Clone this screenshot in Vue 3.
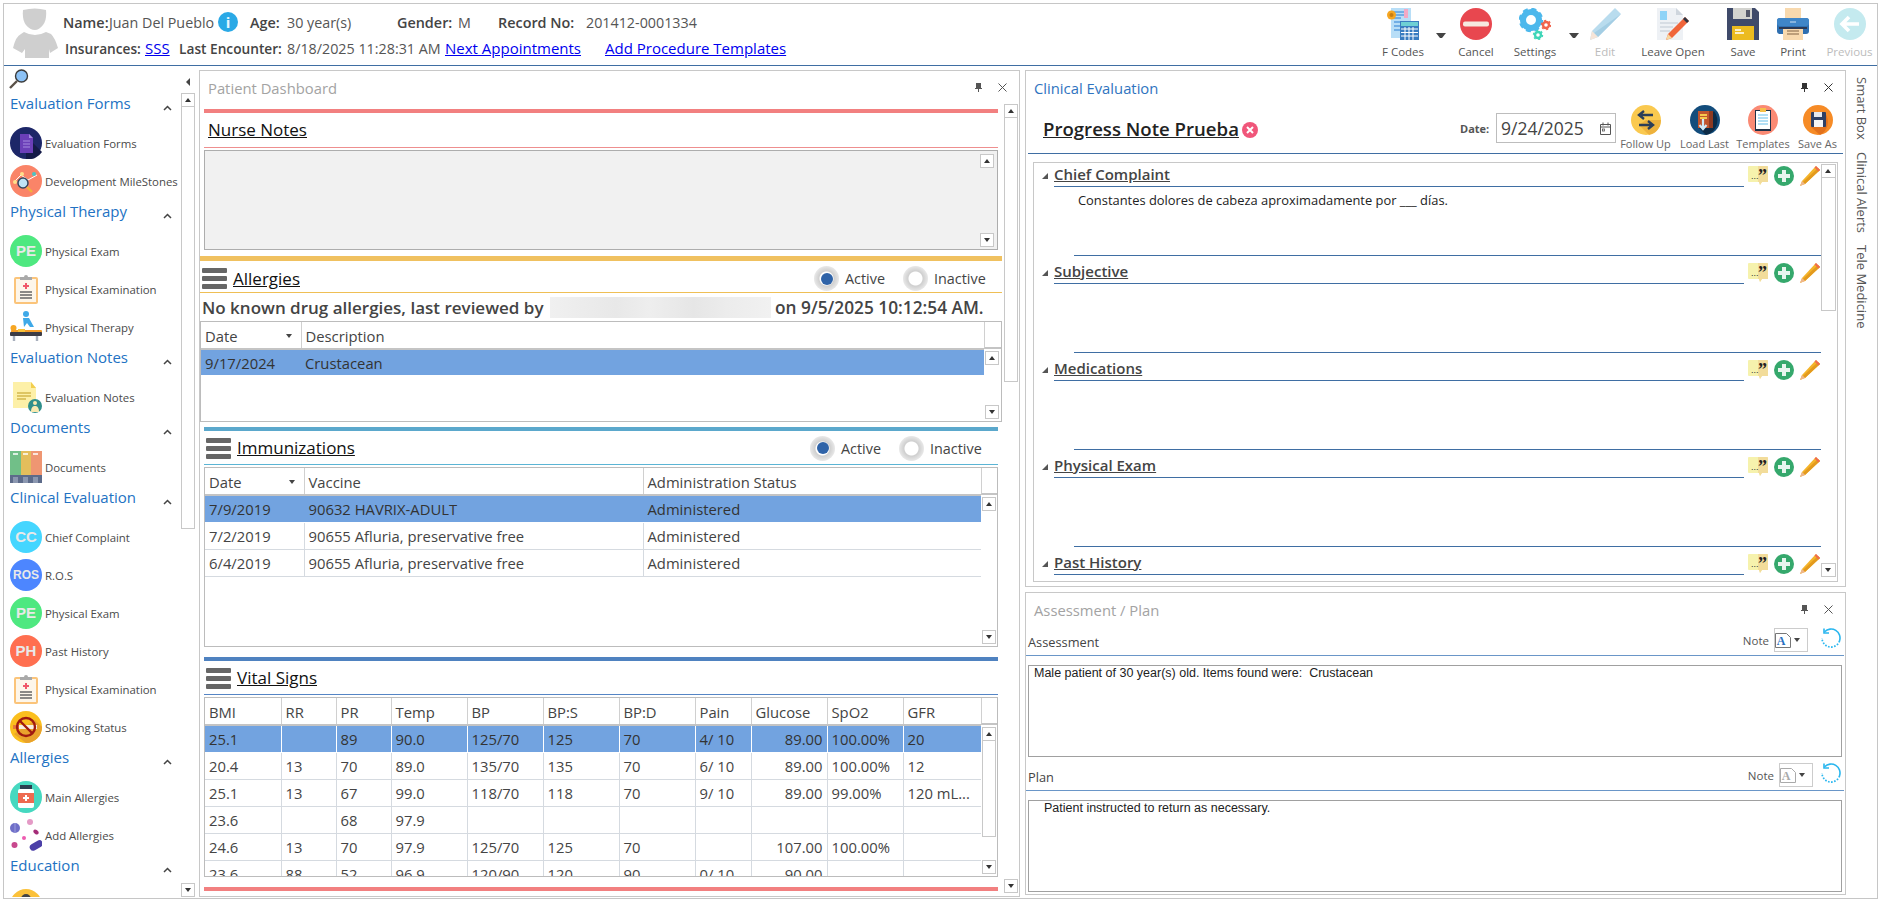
<script setup>
const c = (bg, inner) => `<svg viewBox="0 0 32 32" width="32" height="32"><circle cx="16" cy="16" r="16" fill="${bg}"/>${inner}</svg>`
const letters = (bg, t, s = 15) => c(bg, `<text x="16" y="${16 + s * 0.36}" text-anchor="middle" font-family="Liberation Sans" font-weight="700" font-size="${s}" fill="#e9e9e9">${t}</text>`)
const clip = `<svg viewBox="0 0 32 32" width="32" height="32"><rect x="4" y="4" width="24" height="27" rx="2" fill="#fbc47a"/><rect x="6" y="6" width="20" height="23" fill="#fdf6ea"/><path d="M10 7V4h4a2 2 0 0 1 4 0h4v3z" fill="#a9a9a9"/><path d="M16 10v6M13 13h6" stroke="#f0596a" stroke-width="2"/><path d="M10 19h12M10 22h12M10 25h12" stroke="#666" stroke-width="1.3"/></svg>`
const icons = {
  forms: c('#1d2768', `<path d="M16 9l16 16a16 16 0 0 1-16 7z" fill="#141a48"/><path d="M10 7h9l4 4v15H10z" fill="#6b3fb8"/><path d="M19 7l4 4h-4z" fill="#a58be0"/><path d="M13 14h7M13 17h7M13 20h7" stroke="#a58be0" stroke-width="1.2"/>`),
  miles: c('#fa8468', `<path d="M4 17l7-7 7 5 9-5" fill="none" stroke="#fff" stroke-width="1"/><circle cx="5" cy="17" r="2" fill="#ffe08a"/><circle cx="12" cy="9" r="2" fill="#ffe08a"/><circle cx="24" cy="9" r="2" fill="#49c4c4"/><circle cx="13" cy="18" r="5" fill="#bfe4f5" stroke="#34485e" stroke-width="1.5"/><path d="M17 22l5 5" stroke="#f2b23c" stroke-width="2.4"/>`),
  pe: letters('#4ee880', 'PE', 15),
  clip,
  therapy: `<svg viewBox="0 0 32 32" width="32" height="32"><circle cx="16" cy="3" r="3" fill="#3fa9e8"/><path d="M13 7l6 0 5 9h-4l-3-4-3 4z" fill="#3fa9e8"/><circle cx="3.5" cy="17" r="3" fill="#f6a623"/><rect x="1" y="19" width="31" height="5" rx="1" fill="#f39b26"/><rect x="0" y="21" width="32" height="4" rx="1" fill="#3c3c46"/><path d="M4 25v5M27 25v5" stroke="#a9b0bd" stroke-width="2.4"/><path d="M8 18h7v3H8z" fill="#f8c23a"/></svg>`,
  notes: `<svg viewBox="0 0 32 32" width="32" height="32"><path d="M3 1h18l5 6v20H3z" fill="#fdf0a8"/><path d="M21 1l5 6h-5z" fill="#f2ce4e"/><path d="M7 12h14M7 15h14M7 18h9" stroke="#d3b84e" stroke-width="1.3"/><circle cx="25" cy="25" r="7" fill="#2f8f8b"/><circle cx="25" cy="22" r="2" fill="#f8e9b0"/><path d="M21 31c0-5 2-6 4-6s4 1 4 6z" fill="#f8e9b0"/></svg>`,
  docs: `<svg viewBox="0 0 32 32" width="32" height="32"><rect x="0" y="0" width="11" height="32" fill="#71bf88"/><rect x="11" y="0" width="10" height="32" fill="#e4be5c"/><rect x="21" y="0" width="11" height="32" fill="#ef9672"/><path d="M3 3h5M13 3h5M23 3h5" stroke="#fff" stroke-width="1.6"/><rect y="24" width="32" height="8" fill="#5d6b8a"/><path d="M3 26h5v6H3zM13 26h5v6h-5zM23 26h5v6h-5z" fill="#8b97b0"/></svg>`,
  cc: letters('#45d6ff', 'CC', 15),
  ros: letters('#4d86ff', 'ROS', 12),
  ph: letters('#ff6f50', 'PH', 15),
  smoke: c('#fbbf1e', `<path d="M16 32a16 16 0 0 0 16-16L25 9 4 23z" fill="#e9a22c"/><rect x="3" y="14" width="24" height="4" fill="#f7f0e0"/><rect x="3" y="14" width="6" height="4" fill="#e87a3c"/><circle cx="16" cy="16" r="9" fill="none" stroke="#a01a10" stroke-width="2.4"/><path d="M10 10l12 12" stroke="#a01a10" stroke-width="2.4"/>`),
  allergy: c('#46d8c0', `<rect x="10" y="4" width="12" height="4" fill="#2c3e50"/><rect x="8" y="8" width="16" height="19" rx="2" fill="#fff"/><rect x="8" y="12" width="16" height="10" fill="#ee6a50"/><path d="M16 14v6M13 17h6" stroke="#fff" stroke-width="2"/>`),
  pills: `<svg viewBox="0 0 32 32" width="32" height="32"><circle cx="5" cy="9" r="5" fill="#6f6fc8"/><path d="M5 4v10" stroke="#9c9cdc"/><circle cx="20" cy="3" r="3" fill="#e49ac6"/><ellipse cx="26" cy="13" rx="3" ry="2" fill="#a42c78" transform="rotate(35 26 13)"/><circle cx="14" cy="19" r="2" fill="#ee5cb0"/><circle cx="4.500" cy="26" r="3" fill="#c8488e"/><rect x="19" y="23" width="14" height="7" rx="3.500" fill="#4c40a8" transform="rotate(-30 26 26)"/></svg>`,
  edu: c('#fbc13a', `<circle cx="16" cy="12" r="5" fill="#e9b58a"/><path d="M11 10a5 5 0 0 1 10 0z" fill="#444"/><path d="M7 30c0-9 5-11 9-11s9 2 9 11z" fill="#556"/>`),
  follow: `<svg viewBox="0 0 30 30" width="30" height="30"><circle cx="15" cy="15" r="15" fill="#fac94f"/><path d="M15 15l15 0a15 15 0 0 1-12 15L8 20z" fill="#eeb23c"/><path d="M22 10H10M13 6l-5 4 5 4M8 20h12M17 16l5 4-5 4" fill="none" stroke="#2b3d58" stroke-width="2.4"/></svg>`,
  load: `<svg viewBox="0 0 30 30" width="30" height="30"><circle cx="15" cy="15" r="15" fill="#134d7c"/><path d="M24 6a15 15 0 0 1-8 24L8 22z" fill="#0c2b47"/><rect x="8" y="6" width="15" height="17" fill="#c0552e"/><rect x="19" y="6" width="4" height="17" fill="#8c3a22"/><path d="M10 10h7M10 13h7" stroke="#f6c84e" stroke-width="2"/><path d="M13 14v10M9.500 20l3.500 4 3.500-4" fill="none" stroke="#cfe9f7" stroke-width="2.200"/></svg>`,
  temp: `<svg viewBox="0 0 30 30" width="30" height="30"><circle cx="15" cy="15" r="15" fill="#fa8a74"/><rect x="7" y="5" width="16" height="21" fill="#203148"/><rect x="8" y="6" width="14" height="18" fill="#fff"/><path d="M10 10h10M10 13h10M10 16h10M10 19h10" stroke="#9ad5f2" stroke-width="1.400"/><rect x="12" y="3" width="6" height="4" fill="#f5c04a"/></svg>`,
  saveas: `<svg viewBox="0 0 30 30" width="30" height="30"><circle cx="15" cy="15" r="15" fill="#f68b26"/><path d="M22 8a15 15 0 0 1-5 22L8 22z" fill="#e2711c"/><rect x="8" y="7" width="15" height="15" rx="1" fill="#2e3f64"/><rect x="11" y="7" width="8" height="5" fill="#e4e8ee"/><rect x="11" y="15" width="9" height="7" fill="#f5f5f5"/></svg>`,
  fcodes: `<svg viewBox="0 0 32 32" width="32" height="32"><rect x="4" y="0" width="20" height="30" fill="#b8def7"/><path d="M7 4h14M7 7h14M7 10h7M7 14h14M7 18h14M7 22h9" stroke="#5a9fe0" stroke-width="1.500"/><rect x="17" y="1" width="4" height="9" fill="#f2a8c4"/><rect x="13" y="13" width="19" height="19" fill="#3a7cc0"/><rect x="14" y="14" width="17" height="4" fill="#6ecfd4"/><path d="M14 21h17M14 24.500h17M14 28h17M18 19v13M22 19v13M26 19v13" stroke="#fff" stroke-width="1"/><circle cx="4.500" cy="7" r="4.500" fill="#f5a623"/><circle cx="4.500" cy="7" r="2" fill="#c97e10"/></svg>`,
  cancel: `<svg viewBox="0 0 32 32" width="32" height="32"><circle cx="16" cy="16" r="16" fill="#e8474f"/><rect x="3" y="13.500" width="26" height="5" rx="2" fill="#f6e9e0"/></svg>`,
  settings: `<svg viewBox="0 0 32 32" width="32" height="32"><circle cx="12" cy="12" r="8" fill="none" stroke="#4db8ec" stroke-width="6"/><circle cx="12" cy="12" r="11" fill="none" stroke="#4db8ec" stroke-width="2.500" stroke-dasharray="5 3.640"/><circle cx="27" cy="17" r="3" fill="none" stroke="#f2644c" stroke-width="2.400"/><circle cx="27" cy="17" r="4.500" fill="none" stroke="#f2644c" stroke-width="1.400" stroke-dasharray="2 2.700"/><circle cx="19" cy="27" r="3" fill="none" stroke="#3fd6b8" stroke-width="2.400"/><circle cx="19" cy="27" r="4.500" fill="none" stroke="#3fd6b8" stroke-width="1.400" stroke-dasharray="2 2.700"/></svg>`,
  edit: `<svg viewBox="0 0 32 32" width="32" height="32"><path d="M26 0l6 6L9 29l-8 3 2-9z" fill="#b9dcee"/><path d="M32 6L9 29l-4-4z" fill="#a4cee4"/><path d="M3 23l6 6-8 3z" fill="#f6e5d8"/></svg>`,
  leave: `<svg viewBox="0 0 32 32" width="32" height="32"><path d="M0 0h19l7 7v25H0z" fill="#eef1f5"/><path d="M19 0l7 7h-7z" fill="#cfd6de"/><rect x="3" y="3" width="7" height="9" fill="#8ed3f7"/><path d="M3 15h18M3 19h13M3 23h10" stroke="#cfd6de" stroke-width="1.500"/><path d="M28 9l4 4-17 17-6 2 2-6z" fill="#f0653a"/><path d="M28 9l4 4-2 2-4-4z" fill="#2e3440"/><path d="M11 26l4 4-6 2z" fill="#f8d7a0"/></svg>`,
  save: `<svg viewBox="0 0 32 32" width="32" height="32"><path d="M0 0h28l4 4v28H0z" fill="#3f4a6a"/><rect x="6" y="0" width="19" height="11" fill="#d3d3cf"/><rect x="19" y="2" width="4" height="7" fill="#54586a"/><rect x="5" y="18" width="22" height="14" fill="#ecbb1f"/><path d="M8 22h6M8 25h9" stroke="#fff" stroke-width="1.400"/></svg>`,
  print: `<svg viewBox="0 0 32 32" width="32" height="32"><rect x="8" y="0" width="16" height="11" fill="#f8d9ae"/><rect x="0" y="10" width="32" height="16" rx="3" fill="#2f6fb0"/><rect x="0" y="10" width="32" height="8" rx="3" fill="#3f86c8"/><path d="M13 14h6" stroke="#cfe2f3"/><rect x="6" y="19" width="20" height="13" fill="#f8d9ae"/><path d="M10 23h12M10 26h12" stroke="#a98a68" stroke-width="1.300"/><rect x="2" y="19" width="28" height="2" fill="#2b3a55"/></svg>`,
  prev: `<svg viewBox="0 0 32 32" width="32" height="32"><circle cx="16" cy="16" r="16" fill="#c4eaef"/><path d="M25 16H9M15 9l-7 7 7 7" fill="none" stroke="#fff" stroke-width="3.600"/></svg>`,
  search: `<svg viewBox="0 0 20 20" width="20" height="20"><path d="M8 12l-7 7" stroke="#5a5148" stroke-width="2.400"/><circle cx="12.500" cy="7" r="6" fill="#8cc2f6" stroke="#3b3b3b" stroke-width="1.400"/></svg>`,
  quote: `<svg viewBox="0 0 20 19" width="20" height="19"><path d="M0 1a1 1 0 0 1 1-1h18a1 1 0 0 1 1 1v15H14l-2 3-1-3H1a1 1 0 0 1-1-1z" fill="#f6f2ad"/><path d="M10 0h9a1 1 0 0 1 1 1v15h-6l-2 3-1-3h-1z" fill="#f2dc9a"/><text x="3" y="13" font-family="Liberation Sans" font-size="9" fill="#333">...</text><text x="10" y="16" font-family="Liberation Serif" font-weight="700" font-size="18" fill="#222">”</text></svg>`,
  plus: `<svg viewBox="0 0 20 20" width="20" height="20"><circle cx="10" cy="10" r="10" fill="#35a86c"/><path d="M10 4v12M4 10h12" stroke="#e8f5ee" stroke-width="4"/></svg>`,
  pencil: `<svg viewBox="0 0 20 20" width="20" height="20"><path d="M16 0l4 4L5 18l-5 2 2-5z" fill="#f4b42a"/><path d="M20 4L5 18l-2-2L18 2z" fill="#e39a1e"/><path d="M2 15l3 3-5 2z" fill="#eeb68c"/><path d="M16 0l4 4-1.500 1.500-4-4z" fill="#f06a50"/></svg>`
}
const head1 = [
  { t: 'Name:', w: 46, k: 'lab' }, { t: 'Juan Del Pueblo', w: 109, k: 'val' }, { t: '', w: 32, k: 'badgecell' },
  { t: 'Age:', w: 37, k: 'lab' }, { t: '30 year(s)', w: 110, k: 'val' }, { t: 'Gender:', w: 61, k: 'lab' },
  { t: 'M', w: 40, k: 'val' }, { t: 'Record No:', w: 88, k: 'lab' }, { t: '201412-0001334', w: 130, k: 'val' }
]
const head2 = [
  { t: 'Insurances:', w: 80, k: 'lab' }, { t: 'SSS', w: 34, k: 'lnk' }, { t: 'Last Encounter:', w: 108, k: 'lab' },
  { t: '8/18/2025 11:28:31 AM', w: 158, k: 'val' }, { t: 'Next Appointments', w: 160, k: 'lnk' }, { t: 'Add Procedure Templates', w: 200, k: 'lnk' }
]
const tools = [
  { t: 'F Codes', i: 'fcodes', w: 66 }, { arrow: true }, { t: 'Cancel', i: 'cancel', w: 50 },
  { t: 'Settings', i: 'settings', w: 68 }, { arrow: true, flush: true }, { t: 'Edit', i: 'edit', w: 52, off: true },
  { t: 'Leave Open', i: 'leave', w: 84 }, { t: 'Save', i: 'save', w: 56 }, { t: 'Print', i: 'print', w: 44 },
  { t: 'Previous', i: 'prev', w: 43, off: true, last: true }
]
const side = [
  { h: 'Evaluation Forms', items: [['Evaluation Forms', 'forms'], ['Development MileStones', 'miles']] },
  { h: 'Physical Therapy', items: [['Physical Exam', 'pe'], ['Physical Examination', 'clip'], ['Physical Therapy', 'therapy']] },
  { h: 'Evaluation Notes', items: [['Evaluation Notes', 'notes']] },
  { h: 'Documents', items: [['Documents', 'docs']] },
  { h: 'Clinical Evaluation', items: [['Chief Complaint', 'cc'], ['R.O.S', 'ros'], ['Physical Exam', 'pe'], ['Past History', 'ph'], ['Physical Examination', 'clip'], ['Smoking Status', 'smoke']] },
  { h: 'Allergies', items: [['Main Allergies', 'allergy'], ['Add Allergies', 'pills']] },
  { h: 'Education', items: [['', 'edu']] }
]
const immun = [
  ['7/9/2019', '90632 HAVRIX-ADULT', 'Administered'],
  ['7/2/2019', '90655 Afluria, preservative free', 'Administered'],
  ['6/4/2019', '90655 Afluria, preservative free', 'Administered']
]
const vitalCols = [
  ['BMI', 76], ['RR', 55], ['PR', 55], ['Temp', 76], ['BP', 76], ['BP:S', 76], ['BP:D', 76], ['Pain', 56], ['Glucose', 76], ['SpO2', 76], ['GFR', 78]
]
const vitals = [
  ['25.1', '', '89', '90.0', '125/70', '125', '70', '4/ 10', '89.00', '100.00%', '20'],
  ['20.4', '13', '70', '89.0', '135/70', '135', '70', '6/ 10', '89.00', '100.00%', '12'],
  ['25.1', '13', '67', '99.0', '118/70', '118', '70', '9/ 10', '89.00', '99.00%', '120 mL...'],
  ['23.6', '', '68', '97.9', '', '', '', '', '', '', ''],
  ['24.6', '13', '70', '97.9', '125/70', '125', '70', '', '107.00', '100.00%', ''],
  ['23.6', '88', '52', '96.9', '120/90', '120', '90', '0/ 10', '90.00', '', '']
]
const sections = [
  { t: 'Chief Complaint', body: 'Constantes dolores de cabeza aproximadamente por ___ días.' },
  { t: 'Subjective' }, { t: 'Medications' }, { t: 'Physical Exam' }, { t: 'Past History' }
]
const actions = [
  { t: 'Follow Up', i: 'follow', w: 59 }, { t: 'Load Last', i: 'load', w: 59 },
  { t: 'Templates', i: 'temp', w: 58 }, { t: 'Save As', i: 'saveas', w: 51 }
]
const rail = ['Smart Box', 'Clinical Alerts', 'Tele Medicine']
const assessmentText = 'Male patient of 30 year(s) old. Items found were:  Crustacean'
</script>

<template>
  <div class="frame">
    <header class="top">
      <svg class="avatar" viewBox="0 0 46 50" width="46" height="50">
        <path d="M10 2Q22-1 33 2 34 12 30 17 26 22 22 22 17 22 13 17 9 12 10 2z" fill="#cfcfcf" />
        <path d="M11 24Q22 30 33 24L38 26Q42 30 45 40L37 45 36 41V50Q22 51 12 50V41L9 45 0 40Q3 28 8 26z" fill="#cfcfcf" />
      </svg>
      <div class="info">
        <div class="irow">
          <template v-for="x in head1" :key="x.t + x.w">
            <span :class="x.k" :style="{ width: x.w + 'px' }">
              <i v-if="x.k === 'badgecell'" class="ibadge">i</i>{{ x.t }}
            </span>
          </template>
        </div>
        <div class="irow second">
          <span v-for="x in head2" :key="x.t" :class="x.k" :style="{ width: x.w + 'px' }"><a v-if="x.k === 'lnk'">{{ x.t }}</a><template v-else>{{ x.t }}</template></span>
        </div>
      </div>
      <div class="tools">
        <template v-for="(b, n) in tools" :key="n">
          <i v-if="b.arrow" class="tarrow" :class="{ flush: b.flush }"></i>
          <div v-else class="tool" :class="{ off: b.off, last: b.last }" :style="{ width: b.w + 'px' }">
            <span class="ticon" v-html="icons[b.i]"></span>
            <span class="tlabel">{{ b.t }}</span>
          </div>
        </template>
      </div>
    </header>

    <main class="main">
      <aside class="side">
        <div class="side-top">
          <span class="sic" v-html="icons.search"></span>
          <i class="collapse"></i>
        </div>
        <div class="side-body">
          <div class="side-list">
            <section v-for="g in side" :key="g.h">
              <div class="ghead"><span>{{ g.h }}</span><svg width="9" height="6" viewBox="0 0 9 6"><path d="M1 5l3.500-3.500L8 5" fill="none" stroke="#444" stroke-width="1.500" /></svg></div>
              <div v-for="it in g.items" :key="it[0]" class="sitem">
                <span class="sic32" v-html="icons[it[1]]"></span>
                <span>{{ it[0] }}</span>
              </div>
            </section>
          </div>
          <div class="sb sb-side"><i class="btn up"></i><div class="track"><i class="thumb"></i></div><i class="btn dn"></i></div>
        </div>
      </aside>

      <section class="panel dash">
        <div class="ptitle grey">
          <span>Patient Dashboard</span>
          <span class="pctl">
            <svg class="pin" width="7" height="9" viewBox="0 0 7 9"><path d="M1 0h5v5h1v1H4v3H3V6H0V5h1z" fill="#555" /></svg>
            <svg width="9" height="9" viewBox="0 0 9 9"><path d="M.5.5l8 8M8.500.5l-8 8" stroke="#555" /></svg>
          </span>
        </div>
        <div class="dbody">
          <div class="dcontent">
            <div class="bar bar-red inset"></div>
            <div class="dhead h-nurse inset"><span class="dtitle">Nurse Notes</span></div>
            <div class="nurse inset">
              <div class="sb sb-nurse"><i class="btn up"></i><div class="track"></div><i class="btn dn"></i></div>
            </div>

            <div class="bar bar-yel"></div>
            <div class="dhead h-all">
              <span class="burger"><i></i><i></i><i></i></span>
              <span class="dtitle">Allergies</span>
              <span class="radios">
                <i class="radio on"></i><span class="rl">Active</span>
                <i class="radio"></i><span class="rl">Inactive</span>
              </span>
            </div>
            <div class="nka">
              <span>No known drug allergies, last reviewed by</span>
              <i class="blurred"></i>
              <span>on 9/5/2025 10:12:54 AM.</span>
            </div>
            <div class="tbl t-all">
              <div class="tmain">
                <table>
                  <colgroup><col class="c100" /><col /></colgroup>
                  <thead><tr><th><span class="thsort">Date<i class="sort"></i></span></th><th>Description</th></tr></thead>
                  <tbody><tr class="sel"><td>9/17/2024</td><td>Crustacean</td></tr></tbody>
                </table>
              </div>
              <div class="tside">
                <div class="thfill"></div>
                <div class="sb"><i class="btn up"></i><div class="track"></div><i class="btn dn"></i></div>
              </div>
            </div>

            <div class="bar bar-blue inset"></div>
            <div class="dhead h-imm inset">
              <span class="burger"><i></i><i></i><i></i></span>
              <span class="dtitle">Immunizations</span>
              <span class="radios">
                <i class="radio on"></i><span class="rl">Active</span>
                <i class="radio"></i><span class="rl">Inactive</span>
              </span>
            </div>
            <div class="tbl t-imm inset">
              <div class="tmain">
                <table>
                  <colgroup><col class="c99" /><col class="c339" /><col /></colgroup>
                  <thead><tr><th><span class="thsort">Date<i class="sort"></i></span></th><th>Vaccine</th><th>Administration Status</th></tr></thead>
                  <tbody><tr v-for="(r, n) in immun" :key="n" :class="{ sel: n === 0 }"><td v-for="v in r" :key="v">{{ v }}</td></tr></tbody>
                </table>
              </div>
              <div class="tside">
                <div class="thfill"></div>
                <div class="sb"><i class="btn up"></i><div class="track"></div><i class="btn dn"></i></div>
              </div>
            </div>

            <div class="bar bar-dark inset"></div>
            <div class="dhead h-vit inset">
              <span class="burger"><i></i><i></i><i></i></span>
              <span class="dtitle">Vital Signs</span>
            </div>
            <div class="tbl t-vit inset">
              <div class="tmain">
                <table>
                  <colgroup><col v-for="v in vitalCols" :key="v[0]" :style="{ width: v[1] + 'px' }" /></colgroup>
                  <thead><tr><th v-for="v in vitalCols" :key="v[0]">{{ v[0] }}</th></tr></thead>
                  <tbody>
                    <tr v-for="(r, n) in vitals" :key="n" :class="{ sel: n === 0 }">
                      <td v-for="(v, m) in r" :key="m" :class="{ num: m === 8 }">{{ v }}</td>
                    </tr>
                  </tbody>
                </table>
              </div>
              <div class="tside">
                <div class="thfill"></div>
                <div class="sb"><i class="btn up"></i><div class="track"><i class="thumb"></i></div><i class="btn dn"></i></div>
              </div>
            </div>
            <div class="bar bar-red inset last-red"></div>
          </div>
          <div class="sb sb-dash"><i class="btn up"></i><div class="track"><i class="thumb"></i></div><i class="btn dn"></i></div>
        </div>
      </section>

      <div class="right">
        <section class="panel clinical">
          <div class="ptitle blue">
            <span>Clinical Evaluation</span>
            <span class="pctl">
              <svg class="pin" width="7" height="9" viewBox="0 0 7 9"><path d="M1 0h5v5h1v1H4v3H3V6H0V5h1z" fill="#333" /></svg>
              <svg width="9" height="9" viewBox="0 0 9 9"><path d="M.5.5l8 8M8.500.5l-8 8" stroke="#333" /></svg>
            </span>
          </div>
          <div class="chead">
            <span class="ntitle">Progress Note Prueba</span>
            <svg class="nx" width="16" height="16" viewBox="0 0 16 16"><circle cx="8" cy="8" r="8" fill="#f0567a" /><path d="M5 5l6 6M11 5l-6 6" stroke="#fff" stroke-width="2" /></svg>
            <span class="dlabel">Date:</span>
            <div class="dbox">
              <span>9/24/2025</span>
              <svg width="13" height="13" viewBox="0 0 13 13"><path d="M1.500 2.500h10v10h-10zM1.500 5h10M4 .5v3M9 .5v3" fill="none" stroke="#555" /><rect x="3.500" y="7" width="2" height="2" fill="none" stroke="#555" stroke-width=".8" /></svg>
            </div>
            <div v-for="a in actions" :key="a.t" class="act" :style="{ width: a.w + 'px' }">
              <span class="aic" v-html="icons[a.i]"></span>
              <span>{{ a.t }}</span>
            </div>
          </div>
          <div class="cbox">
            <div class="clist">
              <div v-for="s in sections" :key="s.t" class="sec">
                <div class="shead">
                  <i class="tri"></i>
                  <div class="stitle"><span>{{ s.t }}</span></div>
                  <span class="sicons"><span v-html="icons.quote"></span><span v-html="icons.plus"></span><span v-html="icons.pencil"></span></span>
                </div>
                <div class="sbody">{{ s.body }}</div>
              </div>
            </div>
            <div class="sb sb-cl"><i class="btn up"></i><div class="track"><i class="thumb"></i></div><i class="btn dn"></i></div>
          </div>
        </section>

        <section class="panel assess">
          <div class="ptitle grey">
            <span>Assessment / Plan</span>
            <span class="pctl">
              <svg class="pin" width="7" height="9" viewBox="0 0 7 9"><path d="M1 0h5v5h1v1H4v3H3V6H0V5h1z" fill="#555" /></svg>
              <svg width="9" height="9" viewBox="0 0 9 9"><path d="M.5.5l8 8M8.500.5l-8 8" stroke="#555" /></svg>
            </span>
          </div>
          <div class="arow">
            <span class="alabel">Assessment</span>
            <span class="nlabel">Note</span>
            <div class="ndrop">
              <svg width="17" height="17" viewBox="0 0 17 17"><path d="M.5 1.500h11l4 4v10H.5z" fill="#fff" stroke="#777" /><text x="6" y="13" text-anchor="middle" font-family="Liberation Serif" font-weight="700" font-size="12" fill="#2a6fc0">A</text></svg>
              <i class="miniarrow"></i>
            </div>
            <svg class="refresh" width="22" height="21" viewBox="0 0 22 21"><path d="M19.500 13A9 9 0 0 1 2 10" fill="none" stroke="#29b6ef" stroke-width="1.700" stroke-dasharray="1.600 1.500" /><path d="M4.600 3.700A9 9 0 0 1 19.500 13" fill="none" stroke="#29b6ef" stroke-width="1.600" /><path d="M4 .5v4.500h5" fill="none" stroke="#29b6ef" stroke-width="1.600" /></svg>
          </div>
          <div class="atext">{{ assessmentText }}</div>
          <div class="arow plan">
            <span class="alabel">Plan</span>
            <span class="nlabel">Note</span>
            <div class="ndrop">
              <svg width="17" height="17" viewBox="0 0 17 17"><path d="M.5 1.500h11l4 4v10H.5z" fill="#fff" stroke="#aaa" /><text x="6" y="13" text-anchor="middle" font-family="Liberation Serif" font-weight="700" font-size="12" fill="#aaa">A</text></svg>
              <i class="miniarrow"></i>
            </div>
            <svg class="refresh" width="22" height="21" viewBox="0 0 22 21"><path d="M19.500 13A9 9 0 0 1 2 10" fill="none" stroke="#29b6ef" stroke-width="1.700" stroke-dasharray="1.600 1.500" /><path d="M4.600 3.700A9 9 0 0 1 19.500 13" fill="none" stroke="#29b6ef" stroke-width="1.600" /><path d="M4 .5v4.500h5" fill="none" stroke="#29b6ef" stroke-width="1.600" /></svg>
          </div>
          <div class="atext ptext">Patient instructed to return as necessary.</div>
        </section>
      </div>

      <nav class="rail"><span v-for="r in rail" :key="r">{{ r }}</span></nav>
    </main>
  </div>
</template>

<style>
html, body { margin: 0; background: #fff; }
* { box-sizing: border-box; }
</style>

<style scoped>
.frame { margin: 3px 0 0 3px; width: 1875px; height: 896px; border: 1px solid #c6c6c6; display: flex; flex-direction: column; font-family: "Open Sans", "Noto Sans", sans-serif; color: #444; overflow: hidden; }
i { font-style: normal; display: block; }

.top { flex: none; height: 62px; border-bottom: 1.5px solid #3f6ea3; display: flex; }
.avatar { flex: none; margin: 4px 0 0 9px; }
.info { flex: none; margin-left: 4px; }
.irow { display: flex; align-items: center; height: 26px; margin-top: 5px; font-size: 14.3px; white-space: nowrap; }
.irow.second { margin-top: 0; padding-left: 2px; height: 26px; }
.lab { font-weight: 600; color: #444; font-size: 14.4px; flex: none; }
.second .lab { font-size: 13.7px; }
.val { color: #555; flex: none; }
.lnk { flex: none; font-size: 15px; }
.lnk a { color: #0000ee; text-decoration: underline; }
.badgecell { flex: none; }
.ibadge { width: 20px; height: 20px; border-radius: 50%; background: #2aa9e6; color: #e8f7ff; text-align: center; font: 700 15px/20px "Open Sans", sans-serif; }
.tools { flex: none; display: flex; align-items: flex-start; padding: 4px 6px 0 0; margin-left: auto; }
.tool { flex: none; display: flex; flex-direction: column; align-items: center; font-size: 11.5px; color: #555; white-space: nowrap; }
.tool.off { color: #bcbcbc; }
.tool.last { margin-left: 13px; }
.ticon { display: block; width: 32px; height: 32px; }
.tlabel { margin-top: 3px; line-height: 18px; }
.tarrow { flex: none; width: 10px; margin: 25px 5px 0 0; height: 0; border-left: 4px solid transparent; border-right: 4px solid transparent; border-top: 5px solid #444; }
.tarrow.flush { margin-right: 0; }

.main { flex: 1; min-height: 0; display: flex; }
.side { flex: none; width: 195px; display: flex; flex-direction: column; }
.side-top { flex: none; height: 27px; display: flex; padding: 3px 0 0 5px; }
.sic { width: 20px; height: 20px; }
.collapse { margin: 9px 0 0 157px; width: 0; height: 0; border-top: 4px solid transparent; border-bottom: 4px solid transparent; border-right: 4px solid #444; }
.side-body { flex: 1; min-height: 0; display: flex; }
.side-list { flex: none; width: 177px; height: 804px; overflow: hidden; padding: 2px 0 0 6px; white-space: nowrap; }
.ghead { height: 26px; margin-bottom: 6px; display: flex; justify-content: space-between; font-size: 15px; line-height: 16px; color: #2272c3; padding-right: 9px; }
.ghead svg { margin-top: 10px; }
.sitem { height: 32px; margin-bottom: 6px; display: flex; align-items: center; gap: 3px; font-size: 11.4px; color: #4a4a4a; }
.sic32 { flex: none; width: 32px; height: 32px; }

.sb { flex: none; width: 14px; display: flex; flex-direction: column; }
.btn { flex: none; height: 14px; border: 1px solid #c8c8c8; position: relative; background: #fff; }
.btn::after { content: ""; position: absolute; left: 3px; width: 0; height: 0; border-left: 3.500px solid transparent; border-right: 3.500px solid transparent; }
.btn.up::after { top: 4px; border-bottom: 4px solid #333; }
.btn.dn::after { top: 4px; border-top: 4px solid #333; }
.track { flex: 1; min-height: 0; }
.thumb { border: 1px solid #c8c8c8; border-top: 0; height: 100%; }
.sb-side { height: 804px; }
.sb-side .thumb { height: 422px; }

.panel { flex: none; border: 1px solid #c8c8c8; display: flex; flex-direction: column; }
.dash { margin: 4px 0 0 0; width: 821px; height: 827px; }
.ptitle { flex: none; height: 33px; display: flex; justify-content: space-between; align-items: center; padding: 0 0 0 8px; font-size: 14.8px; }
.ptitle.grey { color: #a3a3a3; }
.ptitle.blue { color: #2f74c0; }
.pctl { display: flex; align-items: center; gap: 16px; padding: 0 12px 0 0; }
.dbody { flex: 1; min-height: 0; display: flex; }
.dcontent { flex: none; width: 803px; padding-top: 5px; }
.sb-dash { margin-left: 1px; height: 789px; }
.sb-dash .thumb { height: 264px; }
.inset { margin-left: 4px; margin-right: 5px; }
.bar { height: 4px; }
.bar-red { background: #f28080; }
.bar-yel { height: 5px; margin: 6px 1px 0 0; background: #f0c160; }
.bar-blue { margin-top: 5px; background: #5ba8cc; }
.bar-dark { margin-top: 10px; background: #4f82c0; }
.last-red { margin-top: 10px; }
.dhead { display: flex; align-items: center; }
.dtitle { font-size: 17px; color: #111; text-decoration: underline; line-height: 22px; }
.h-nurse { height: 35px; border-bottom: 1px solid #ee8f8f; padding: 0 0 1px 4px; }
.nurse { height: 100px; margin-top: 2px; border: 1px solid #adadad; background: #f1f1f1; display: flex; justify-content: flex-end; padding: 3px 3px 2px 0; }
.sb-nurse { width: 14px; }
.h-all { height: 32px; border-bottom: 1px solid #efbf55; padding: 4px 0 0 2px; margin-right: 1px; }
.h-imm { height: 34px; border-bottom: 1px solid #5bb5d5; padding: 1px 0 0 2px; }
.h-vit { height: 34px; border-bottom: 1px solid #5585c5; padding: 1px 0 0 2px; }
.burger { flex: none; width: 25px; height: 21px; margin-right: 6px; display: flex; flex-direction: column; justify-content: space-between; }
.burger i { height: 5px; border-radius: 1px; background: #666; }
.radios { margin-left: auto; display: flex; align-items: center; font-size: 14.4px; color: #444; padding-right: 18px; }
.radio { width: 25px; height: 25px; border-radius: 50%; background: radial-gradient(circle, #fff 0 6.500px, #cfcfcf 7.500px, #e6e6e6 12px); margin-right: 6px; position: relative; }
.radio.on::after { content: ""; position: absolute; left: 6.500px; top: 6.500px; width: 12px; height: 12px; border-radius: 50%; background: #2f63a8; }
.rl { width: 58px; }
.rl:last-child { width: 50px; }
.nka { height: 28px; display: flex; align-items: center; padding-left: 2px; font-size: 17px; font-weight: 600; color: #444; white-space: nowrap; }
.nka span:last-child { font-size: 17.3px; }
.blurred { flex: none; width: 221px; height: 21px; margin: 0 4px 0 7px; background: linear-gradient(90deg, #f0f0f0, #e8e8e8 30%, #eee 45%, #e6e6e6 65%, #ececec 80%, #f1f1f1); }
.nka span:first-child { flex: none; width: 341px; }

.tbl { display: flex; border: 1px solid #bcbcbc; }
.t-all { height: 101px; margin-right: 1px; }
.t-imm { height: 180px; margin-top: 2px; }
.t-vit { height: 180px; margin-top: 2px; }
.tmain { flex: none; overflow: hidden; }
.t-all .tmain { width: 783px; }
.t-imm .tmain, .t-vit .tmain { width: 776px; }
table { width: 100%; table-layout: fixed; border-collapse: collapse; font-size: 14.8px; color: #444; }
.c100 { width: 100px; }
.c99 { width: 99px; }
.c339 { width: 339px; }
th { height: 27px; font-weight: 400; text-align: left; padding: 2px 4px 0; border-right: 1px solid #d0d0d0; border-bottom: 2px solid #c4c4c4; white-space: nowrap; }
th:last-child { border-right: 0; }
td { height: 27px; padding: 1px 4px 0; border-right: 1px solid #d5dae0; border-bottom: 1px solid #d5dae0; white-space: nowrap; overflow: hidden; }
td:last-child { border-right: 0; }
td.num { text-align: right; }
.t-all td { border: 0; height: 26px; }
tr.sel td { background: #72a3e0; color: #333; border-color: #72a3e0; }
.t-vit tr.sel td { border-right-color: #fff; }
.t-imm tr.sel td, .t-vit tr.sel td { border-bottom-color: #fff; }
.t-vit tr.sel td:last-child { border-right: 0; }
.thsort { display: flex; justify-content: space-between; align-items: center; padding-right: 5px; }
.sort { width: 0; height: 0; border-left: 3.500px solid transparent; border-right: 3.500px solid transparent; border-top: 4px solid #444; }
.tside { flex: 1; min-width: 0; display: flex; flex-direction: column; }
.thfill { flex: none; height: 27px; border-left: 1px solid #d0d0d0; border-bottom: 2px solid #c4c4c4; }
.tside .sb { flex: 1; min-height: 0; margin: 2px 0 2px 1px; }
.t-vit .thumb { height: 96px; }

.right { flex: none; margin-left: 5px; width: 821px; display: flex; flex-direction: column; gap: 5px; padding-top: 4px; }
.clinical { flex: none; height: 517px; }
.chead { flex: none; height: 50px; margin: 0 2px 0 2px; border-bottom: 1.5px solid #3f6ea3; display: flex; align-items: flex-start; padding-left: 15px; }
.ntitle { flex: none; font-size: 18.6px; font-weight: 600; color: #222; text-decoration: underline; margin-top: 12px; width: 199px; white-space: nowrap; }
.nx { margin: 18px 0 0 0; flex: none; }
.dlabel { margin: 17px 8px 0 202px; width: 28px; font-size: 11px; font-weight: 700; color: #555; flex: none; }
.dbox { flex: none; width: 120px; height: 30px; margin-top: 9px; border: 1px solid #bdbdbd; display: flex; align-items: center; justify-content: space-between; padding: 0 3px 0 4px; font-size: 17.5px; color: #444; }
.act { flex: none; display: flex; flex-direction: column; align-items: center; font-size: 11px; color: #666; white-space: nowrap; }
.aic { display: block; width: 30px; height: 30px; margin-top: 1px; }
.act span:last-child { line-height: 16px; margin-top: 1px; }
.cbox { flex: none; margin: 8px 0 0 7px; width: 805px; height: 420px; border: 1px solid #c8c8c8; display: flex; }
.clist { flex: none; width: 787px; height: 418px; overflow: hidden; }
.sec { height: 97px; }
.shead { height: 25px; display: flex; align-items: flex-start; }
.tri { margin: 10px 6px 0 8px; width: 0; height: 0; border-bottom: 6px solid #555; border-left: 6px solid transparent; flex: none; }
.stitle { flex: none; width: 690px; height: 24px; border-bottom: 1.5px solid #3f6ea3; font-size: 15px; font-weight: 600; color: #444; line-height: 23px; }
.stitle span { text-decoration: underline; }
.sicons { display: flex; gap: 6px; margin: 3px 0 0 4px; }
.sicons span { display: block; height: 20px; }
.sbody { margin-left: 40px; height: 68px; padding: 2px 0 0 4px; border-bottom: 1px solid #3f6ea3; font-size: 12.9px; color: #222; line-height: 20px; }
.sb-cl { width: 15px; margin: 1px 0 0 0; height: 413px; }
.sb-cl .thumb { height: 133px; }
.assess { flex: none; height: 303px; }
.arow { flex: none; height: 30px; margin: 0 1px 0 0; border-bottom: 1.5px solid #6a96c8; display: flex; align-items: flex-end; }
.alabel { font-size: 12.8px; line-height: 18px; padding-left: 2px; margin-bottom: 4px; flex: 1; color: #444; }
.nlabel { font-size: 11.5px; line-height: 16px; margin-bottom: 6px; color: #555; }
.ndrop { flex: none; width: 34px; height: 24px; margin: 0 12px 3px 5px; border: 1px solid #ccc; display: flex; align-items: center; gap: 2px; }
.miniarrow { width: 0; height: 0; border-left: 3.500px solid transparent; border-right: 3.500px solid transparent; border-top: 4px solid #444; }
.refresh { margin: 0 2px 6px 0; flex: none; }
.plan { height: 34px; }
.plan .ndrop { margin-right: 7px; }
.atext { flex: none; height: 92px; margin: 9px 3px 0 2px; border: 1px solid #a0a0a0; padding: 0 0 0 5px; font: 12.5px/14px "Liberation Sans", Arial, sans-serif; color: #222; white-space: pre; }
.ptext { padding-left: 15px; }
.rail { flex: 1; display: flex; flex-direction: column; align-items: center; gap: 12px; padding-top: 11px; }
.rail span { writing-mode: vertical-rl; font-size: 13px; color: #555; white-space: nowrap; }
</style>
